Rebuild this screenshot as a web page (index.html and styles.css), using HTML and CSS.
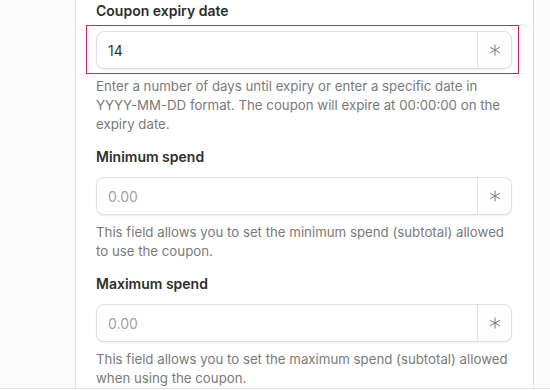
FILE: index.html
```html
<!DOCTYPE html>
<html lang="en">
<head>
<meta charset="utf-8">
<title>Coupon settings</title>
<link rel="stylesheet" href="styles.css">
</head>
<body>
<div class="page">
  <div class="panel">
    <div class="field">
      <div class="label">Coupon expiry date</div>
      <div class="input-group highlighted">
        <div class="input-value">14</div>
        <div class="suffix"><svg width="12" height="12" viewBox="0 0 12 12"><path d="M6 0.5V11.5M1.2 3.2L10.8 8.8M1.2 8.8L10.8 3.2" stroke="#7a7a7a" stroke-width="1" fill="none"/></svg></div>
      </div>
      <p class="help">Enter a number of days until expiry or enter a specific date in YYYY-MM-DD format. The coupon will expire at 00:00:00 on the expiry date.</p>
    </div>
    <div class="field">
      <div class="label">Minimum spend</div>
      <div class="input-group">
        <div class="input-value placeholder">0.00</div>
        <div class="suffix"><svg width="12" height="12" viewBox="0 0 12 12"><path d="M6 0.5V11.5M1.2 3.2L10.8 8.8M1.2 8.8L10.8 3.2" stroke="#7a7a7a" stroke-width="1" fill="none"/></svg></div>
      </div>
      <p class="help">This field allows you to set the minimum spend (subtotal) allowed to use the coupon.</p>
    </div>
    <div class="field">
      <div class="label">Maximum spend</div>
      <div class="input-group">
        <div class="input-value placeholder">0.00</div>
        <div class="suffix"><svg width="12" height="12" viewBox="0 0 12 12"><path d="M6 0.5V11.5M1.2 3.2L10.8 8.8M1.2 8.8L10.8 3.2" stroke="#7a7a7a" stroke-width="1" fill="none"/></svg></div>
      </div>
      <p class="help">This field allows you to set the maximum spend (subtotal) allowed when using the coupon.</p>
    </div>
  </div>
</div>
</body>
</html>
```

FILE: styles.css
```css
* { box-sizing: border-box; }
html, body { margin: 0; padding: 0; }
body {
  background: #fcfcfc;
  font-family: Inter, "Noto Sans", sans-serif;
  width: 550px;
  height: 390px;
  overflow: hidden;
}
.page {
  height: 389px;
  border-bottom: 1px solid #e4e4e4;
  padding-left: 75px;
}
.panel {
  width: 459px;
  height: 100%;
  background: #ffffff;
  border-left: 1px solid #e2e2e2;
  border-right: 1px solid #e2e2e2;
  padding: 1px 21px 0 20px;
}
.field { margin-bottom: 13px; }
.label {
  font-size: 14px;
  font-weight: 600;
  line-height: 20px;
  color: #2e2e2e;
  margin-bottom: 10px;
}
.input-group {
  position: relative;
  display: flex;
  height: 38px;
  border: 1px solid #dedede;
  border-radius: 8px;
  background: #fff;
  box-shadow: 0 1px 2px rgba(0,0,0,0.07);
}
.highlighted::before {
  content: "";
  position: absolute;
  top: -7px;
  bottom: -6px;
  left: -11px;
  right: -8px;
  border: 1.5px solid #cc2450;
  pointer-events: none;
}
.input-value {
  flex: 1;
  display: flex;
  align-items: center;
  padding-left: 11px;
  font-size: 14px;
  color: #333;
}
.input-value.placeholder { color: #a3a3a3; }
.suffix {
  width: 34px;
  border-left: 1px solid #e2e2e2;
  display: flex;
  align-items: center;
  justify-content: center;
  border-radius: 0 8px 8px 0;
  background: #fdfdfd;
}
.suffix svg { display: block; }
.help {
  margin: 8px 0 0;
  font-size: 13.25px;
  line-height: 19px;
  color: #7a7a7a;
}
```
